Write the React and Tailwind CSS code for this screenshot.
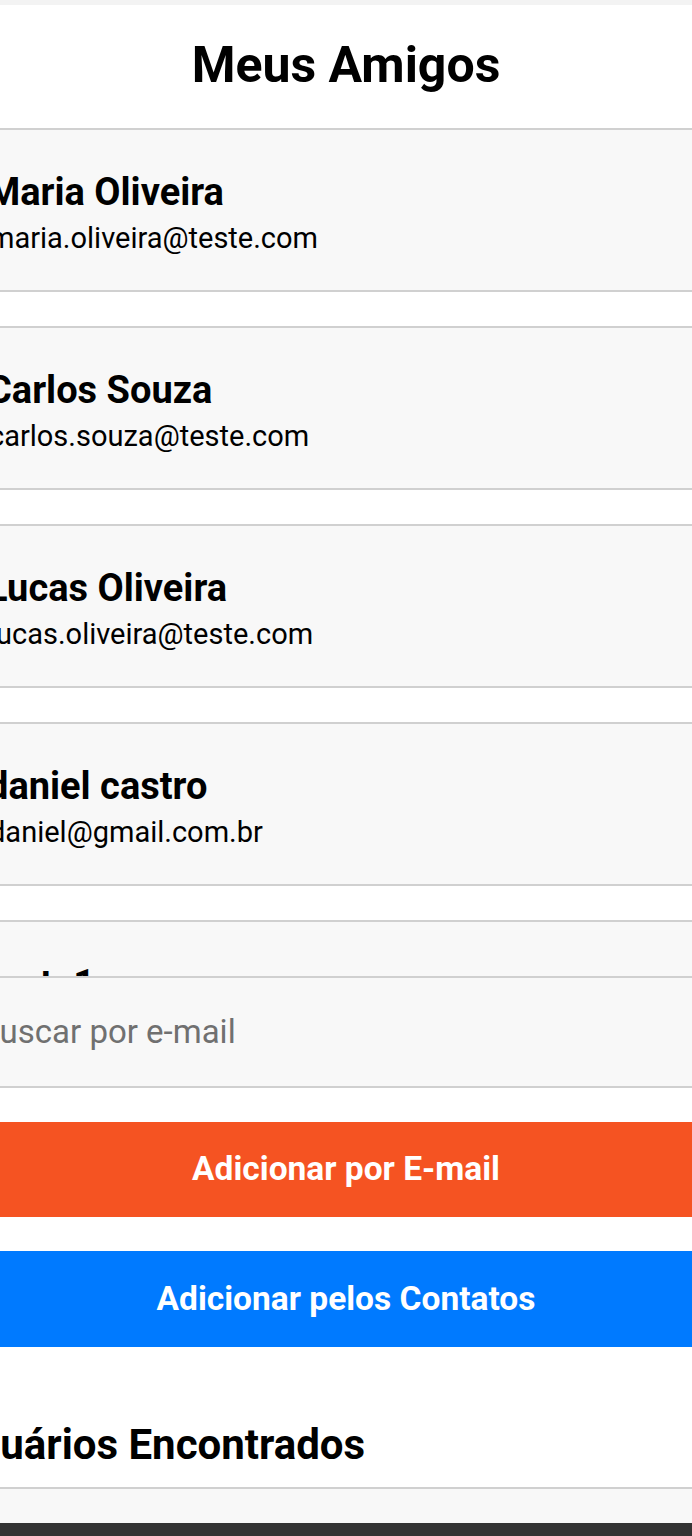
const FRIENDS = [
  { name: 'Maria Oliveira', email: 'maria.oliveira@teste.com' },
  { name: 'Carlos Souza', email: 'carlos.souza@teste.com' },
  { name: 'Lucas Oliveira', email: 'lucas.oliveira@teste.com' },
  { name: 'daniel castro', email: 'daniel@gmail.com.br' },
  { name: 'teste1', email: 'teste1@teste.com' },
];

function FriendRow({ friend }) {
  return (
    <div className="shrink-0 h-[164px] border-y-2 border-[#d0d0d0] bg-[#f8f8f8] pt-[40px] mb-[34px]">
      <p className="-ml-[13px] text-[38px] leading-[44px] font-bold text-black whitespace-nowrap">
        {friend.name}
      </p>
      <p className="-ml-[11px] mt-[7px] text-[29px] leading-[34px] text-black whitespace-nowrap">
        {friend.email}
      </p>
    </div>
  );
}

export default function App() {
  return (
    <div className="w-[692px] h-[1536px] overflow-hidden bg-white flex flex-col font-['Roboto',_'Liberation_Sans',_sans-serif]">
      <div className="h-[5px] bg-[#f3f3f3]" />

      {/* header */}
      <div className="h-[123px] flex items-center justify-center pb-[4px]">
        <h1 className="text-[50px] leading-[60px] font-bold text-black">Meus Amigos</h1>
      </div>

      {/* lista */}
      <div className="h-[848px] overflow-hidden flex flex-col">
        {FRIENDS.map((f) => (
          <FriendRow key={f.email} friend={f} />
        ))}
      </div>

      {/* busca */}
      <div className="h-[112px] border-y-2 border-[#d0d0d0] bg-[#f8f8f8] flex items-center">
        <span className="-ml-[21px] text-[33px] leading-[40px] text-[#707070] whitespace-nowrap">
          Buscar por e-mail
        </span>
      </div>

      <div className="mt-[34px] h-[95px] bg-[#f55322] flex items-center justify-center">
        <span className="text-[33.5px] font-bold text-white">Adicionar por E-mail</span>
      </div>
      <div className="mt-[34px] h-[96px] bg-[#007aff] flex items-center justify-center">
        <span className="text-[33.5px] font-bold text-white">Adicionar pelos Contatos</span>
      </div>

      <h2 className="mt-[73px] -ml-[49px] text-[42px] leading-[50px] font-bold text-black whitespace-nowrap">
        Usuários Encontrados
      </h2>

      <div className="mt-[17px] h-[36px] border-t-2 border-[#d0d0d0] bg-[#f8f8f8]" />
      <div className="flex-1 bg-[#333333]" />
    </div>
  );
}
